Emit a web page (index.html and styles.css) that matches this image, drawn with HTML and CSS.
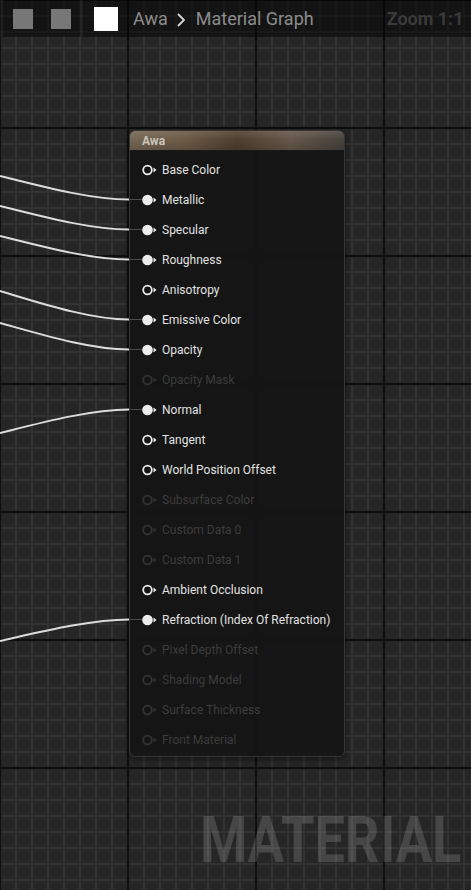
FILE: index.html
```html
<!DOCTYPE html>
<html>
<head>
<meta charset="utf-8">
<link rel="stylesheet" href="styles.css">
</head>
<body>
<div class="graph">
  <header class="toolbar">
    <span class="tool-btn"></span>
    <span class="tool-btn"></span>
    <span class="tool-sep"></span>
    <span class="tool-swatch"></span>
    <nav class="crumbs">
      <span class="crumb">Awa</span>
      <svg class="chev" width="10" height="16" viewBox="0 0 10 16"><path d="M2 2 L8 8 L2 14" fill="none" stroke="#d8d8d8" stroke-width="1.8"/></svg>
      <span class="crumb">Material Graph</span>
    </nav>
    <span class="zoom">Zoom 1:1</span>
  </header>

  <svg class="wires" width="471" height="890" viewBox="0 0 471 890">
    <g fill="none" stroke="#dcdcdc" stroke-width="2">
      <path d="M0 176 C40 186, 90 199.5, 129 199.5"/>
      <path d="M0 206 C40 216, 90 229.5, 129 229.5"/>
      <path d="M0 236 C40 246, 90 259.5, 129 259.5"/>
      <path d="M0 291 C40 303, 90 319.5, 129 319.5"/>
      <path d="M0 323 C40 334, 90 349.5, 129 349.5"/>
      <path d="M0 433 C40 423, 90 409.5, 129 409.5"/>
      <path d="M0 641 C40 632, 90 619.5, 129 619.5"/>
    </g>
    <g stroke="#4a4a4a" stroke-width="1">
      <path d="M130 199.5 H142"/>
      <path d="M130 229.5 H142"/>
      <path d="M130 259.5 H142"/>
      <path d="M130 319.5 H142"/>
      <path d="M130 349.5 H142"/>
      <path d="M130 409.5 H142"/>
      <path d="M130 619.5 H142"/>
    </g>
  </svg>

  <section class="node">
    <div class="node-title">Awa</div>
    <ul class="pins">
      <li class="pin"><svg class="pin-ico" viewBox="0 0 16 12"><circle cx="5.5" cy="6" r="4.3" fill="none" stroke="currentColor" stroke-width="1.8"/><path d="M11.5 3.5 L14.5 6 L11.5 8.5 Z" fill="currentColor"/></svg>Base Color</li>
      <li class="pin"><svg class="pin-ico" viewBox="0 0 16 12"><circle cx="5.5" cy="6" r="5.3" fill="currentColor"/><path d="M11.5 3.5 L14.5 6 L11.5 8.5 Z" fill="currentColor"/></svg>Metallic</li>
      <li class="pin"><svg class="pin-ico" viewBox="0 0 16 12"><circle cx="5.5" cy="6" r="5.3" fill="currentColor"/><path d="M11.5 3.5 L14.5 6 L11.5 8.5 Z" fill="currentColor"/></svg>Specular</li>
      <li class="pin"><svg class="pin-ico" viewBox="0 0 16 12"><circle cx="5.5" cy="6" r="5.3" fill="currentColor"/><path d="M11.5 3.5 L14.5 6 L11.5 8.5 Z" fill="currentColor"/></svg>Roughness</li>
      <li class="pin"><svg class="pin-ico" viewBox="0 0 16 12"><circle cx="5.5" cy="6" r="4.3" fill="none" stroke="currentColor" stroke-width="1.8"/><path d="M11.5 3.5 L14.5 6 L11.5 8.5 Z" fill="currentColor"/></svg>Anisotropy</li>
      <li class="pin"><svg class="pin-ico" viewBox="0 0 16 12"><circle cx="5.5" cy="6" r="5.3" fill="currentColor"/><path d="M11.5 3.5 L14.5 6 L11.5 8.5 Z" fill="currentColor"/></svg>Emissive Color</li>
      <li class="pin"><svg class="pin-ico" viewBox="0 0 16 12"><circle cx="5.5" cy="6" r="5.3" fill="currentColor"/><path d="M11.5 3.5 L14.5 6 L11.5 8.5 Z" fill="currentColor"/></svg>Opacity</li>
      <li class="pin off"><svg class="pin-ico" viewBox="0 0 16 12"><circle cx="5.5" cy="6" r="4.3" fill="none" stroke="currentColor" stroke-width="1.8"/><path d="M11.5 3.5 L14.5 6 L11.5 8.5 Z" fill="currentColor"/></svg>Opacity Mask</li>
      <li class="pin"><svg class="pin-ico" viewBox="0 0 16 12"><circle cx="5.5" cy="6" r="5.3" fill="currentColor"/><path d="M11.5 3.5 L14.5 6 L11.5 8.5 Z" fill="currentColor"/></svg>Normal</li>
      <li class="pin"><svg class="pin-ico" viewBox="0 0 16 12"><circle cx="5.5" cy="6" r="4.3" fill="none" stroke="currentColor" stroke-width="1.8"/><path d="M11.5 3.5 L14.5 6 L11.5 8.5 Z" fill="currentColor"/></svg>Tangent</li>
      <li class="pin"><svg class="pin-ico" viewBox="0 0 16 12"><circle cx="5.5" cy="6" r="4.3" fill="none" stroke="currentColor" stroke-width="1.8"/><path d="M11.5 3.5 L14.5 6 L11.5 8.5 Z" fill="currentColor"/></svg>World Position Offset</li>
      <li class="pin off"><svg class="pin-ico" viewBox="0 0 16 12"><circle cx="5.5" cy="6" r="4.3" fill="none" stroke="currentColor" stroke-width="1.8"/><path d="M11.5 3.5 L14.5 6 L11.5 8.5 Z" fill="currentColor"/></svg>Subsurface Color</li>
      <li class="pin off"><svg class="pin-ico" viewBox="0 0 16 12"><circle cx="5.5" cy="6" r="4.3" fill="none" stroke="currentColor" stroke-width="1.8"/><path d="M11.5 3.5 L14.5 6 L11.5 8.5 Z" fill="currentColor"/></svg>Custom Data 0</li>
      <li class="pin off"><svg class="pin-ico" viewBox="0 0 16 12"><circle cx="5.5" cy="6" r="4.3" fill="none" stroke="currentColor" stroke-width="1.8"/><path d="M11.5 3.5 L14.5 6 L11.5 8.5 Z" fill="currentColor"/></svg>Custom Data 1</li>
      <li class="pin"><svg class="pin-ico" viewBox="0 0 16 12"><circle cx="5.5" cy="6" r="4.3" fill="none" stroke="currentColor" stroke-width="1.8"/><path d="M11.5 3.5 L14.5 6 L11.5 8.5 Z" fill="currentColor"/></svg>Ambient Occlusion</li>
      <li class="pin"><svg class="pin-ico" viewBox="0 0 16 12"><circle cx="5.5" cy="6" r="5.3" fill="currentColor"/><path d="M11.5 3.5 L14.5 6 L11.5 8.5 Z" fill="currentColor"/></svg>Refraction (Index Of Refraction)</li>
      <li class="pin off"><svg class="pin-ico" viewBox="0 0 16 12"><circle cx="5.5" cy="6" r="4.3" fill="none" stroke="currentColor" stroke-width="1.8"/><path d="M11.5 3.5 L14.5 6 L11.5 8.5 Z" fill="currentColor"/></svg>Pixel Depth Offset</li>
      <li class="pin off"><svg class="pin-ico" viewBox="0 0 16 12"><circle cx="5.5" cy="6" r="4.3" fill="none" stroke="currentColor" stroke-width="1.8"/><path d="M11.5 3.5 L14.5 6 L11.5 8.5 Z" fill="currentColor"/></svg>Shading Model</li>
      <li class="pin off"><svg class="pin-ico" viewBox="0 0 16 12"><circle cx="5.5" cy="6" r="4.3" fill="none" stroke="currentColor" stroke-width="1.8"/><path d="M11.5 3.5 L14.5 6 L11.5 8.5 Z" fill="currentColor"/></svg>Surface Thickness</li>
      <li class="pin off"><svg class="pin-ico" viewBox="0 0 16 12"><circle cx="5.5" cy="6" r="4.3" fill="none" stroke="currentColor" stroke-width="1.8"/><path d="M11.5 3.5 L14.5 6 L11.5 8.5 Z" fill="currentColor"/></svg>Front Material</li>
    </ul>
  </section>

  <div class="watermark">MATERIAL</div>
</div>
</body>
</html>
```

FILE: styles.css
```css
* { box-sizing: border-box; }
html, body { margin: 0; padding: 0; }
body {
  width: 471px;
  height: 890px;
  overflow: hidden;
  font-family: Roboto, "Noto Sans", sans-serif;
}
.graph {
  position: relative;
  width: 471px;
  height: 890px;
  background-color: #262626;
  background-image:
    linear-gradient(90deg, #0e0e0e 0 2px, transparent 2px),
    linear-gradient(180deg, #0e0e0e 0 2px, transparent 2px),
    linear-gradient(90deg, #333333 0 2px, transparent 2px),
    linear-gradient(180deg, #333333 0 2px, transparent 2px);
  background-size: 128px 128px, 128px 128px, 16px 16px, 16px 16px;
  background-position: -1px -1px;
}
.toolbar {
  position: relative;
  z-index: 3;
  height: 37px;
  display: flex;
  align-items: center;
  background: rgba(0, 0, 0, 0.5);
  padding-left: 10px;
  border-left: 3px solid rgba(255,255,255,0.06);
  margin: 0;
}
.tool-btn {
  width: 20px;
  height: 20px;
  background: #777777;
  margin-right: 18px;
  flex: none;
}
.tool-btn + .tool-btn { margin-right: 9px; }
.tool-sep {
  width: 3px;
  height: 37px;
  background: rgba(255,255,255,0.06);
  margin-right: 11px;
  flex: none;
}
.tool-swatch {
  width: 24px;
  height: 24px;
  background: #ffffff;
  margin-right: 15px;
  flex: none;
}
.crumbs {
  display: flex;
  align-items: center;
  font-size: 18px;
  line-height: 21px;
  color: #8c8c8c;
}
.chev { margin: 2px 10px 0 8px; }
.zoom {
  margin-left: 73px;
  font-size: 18px;
  line-height: 21px;
  font-weight: 700;
  color: #3a3a3a;
  white-space: nowrap;
}
.wires {
  position: absolute;
  left: 0;
  top: 0;
  z-index: 2;
  pointer-events: none;
}
.node {
  position: absolute;
  left: 129px;
  top: 130px;
  width: 216px;
  height: 627px;
  z-index: 1;
  background: rgba(19, 20, 19, 0.94);
  border: 1px solid #353535;
  border-radius: 6px;
  box-shadow: 0 2px 6px rgba(0,0,0,0.5);
  overflow: hidden;
}
.node-title {
  height: 20px;
  padding-left: 12px;
  font-size: 12px;
  font-weight: 700;
  line-height: 21px;
  color: #c9c4bd;
  background:
    linear-gradient(180deg, rgba(255,255,255,0.10) 0%, rgba(255,255,255,0) 45%, rgba(0,0,0,0.15) 100%),
    linear-gradient(90deg, #766653 0%, #6c5b47 25%, #4f3f2e 50%, #66574a 75%, #47423d 100%);
  border-bottom: 1px solid #1a1a1a;
}
.pins {
  list-style: none;
  margin: 0;
  padding: 4px 0 0 0;
}
.pin {
  height: 30px;
  display: flex;
  align-items: center;
  padding-left: 12px;
  font-size: 12px;
  color: #e2e2e2;
  white-space: nowrap;
}
.pin-ico {
  width: 16px;
  height: 12px;
  margin-right: 4px;
  color: #ececec;
  flex: none;
}
.pin.off { color: #3d3d3d; }
.pin.off .pin-ico { color: #333333; }
.watermark {
  position: absolute;
  left: 200px;
  top: 809px;
  font-size: 64px;
  line-height: 64px;
  font-weight: 700;
  color: rgba(255,255,255,0.15);
  transform: scaleX(0.845);
  transform-origin: left top;
  white-space: nowrap;
  z-index: 0;
}
```
